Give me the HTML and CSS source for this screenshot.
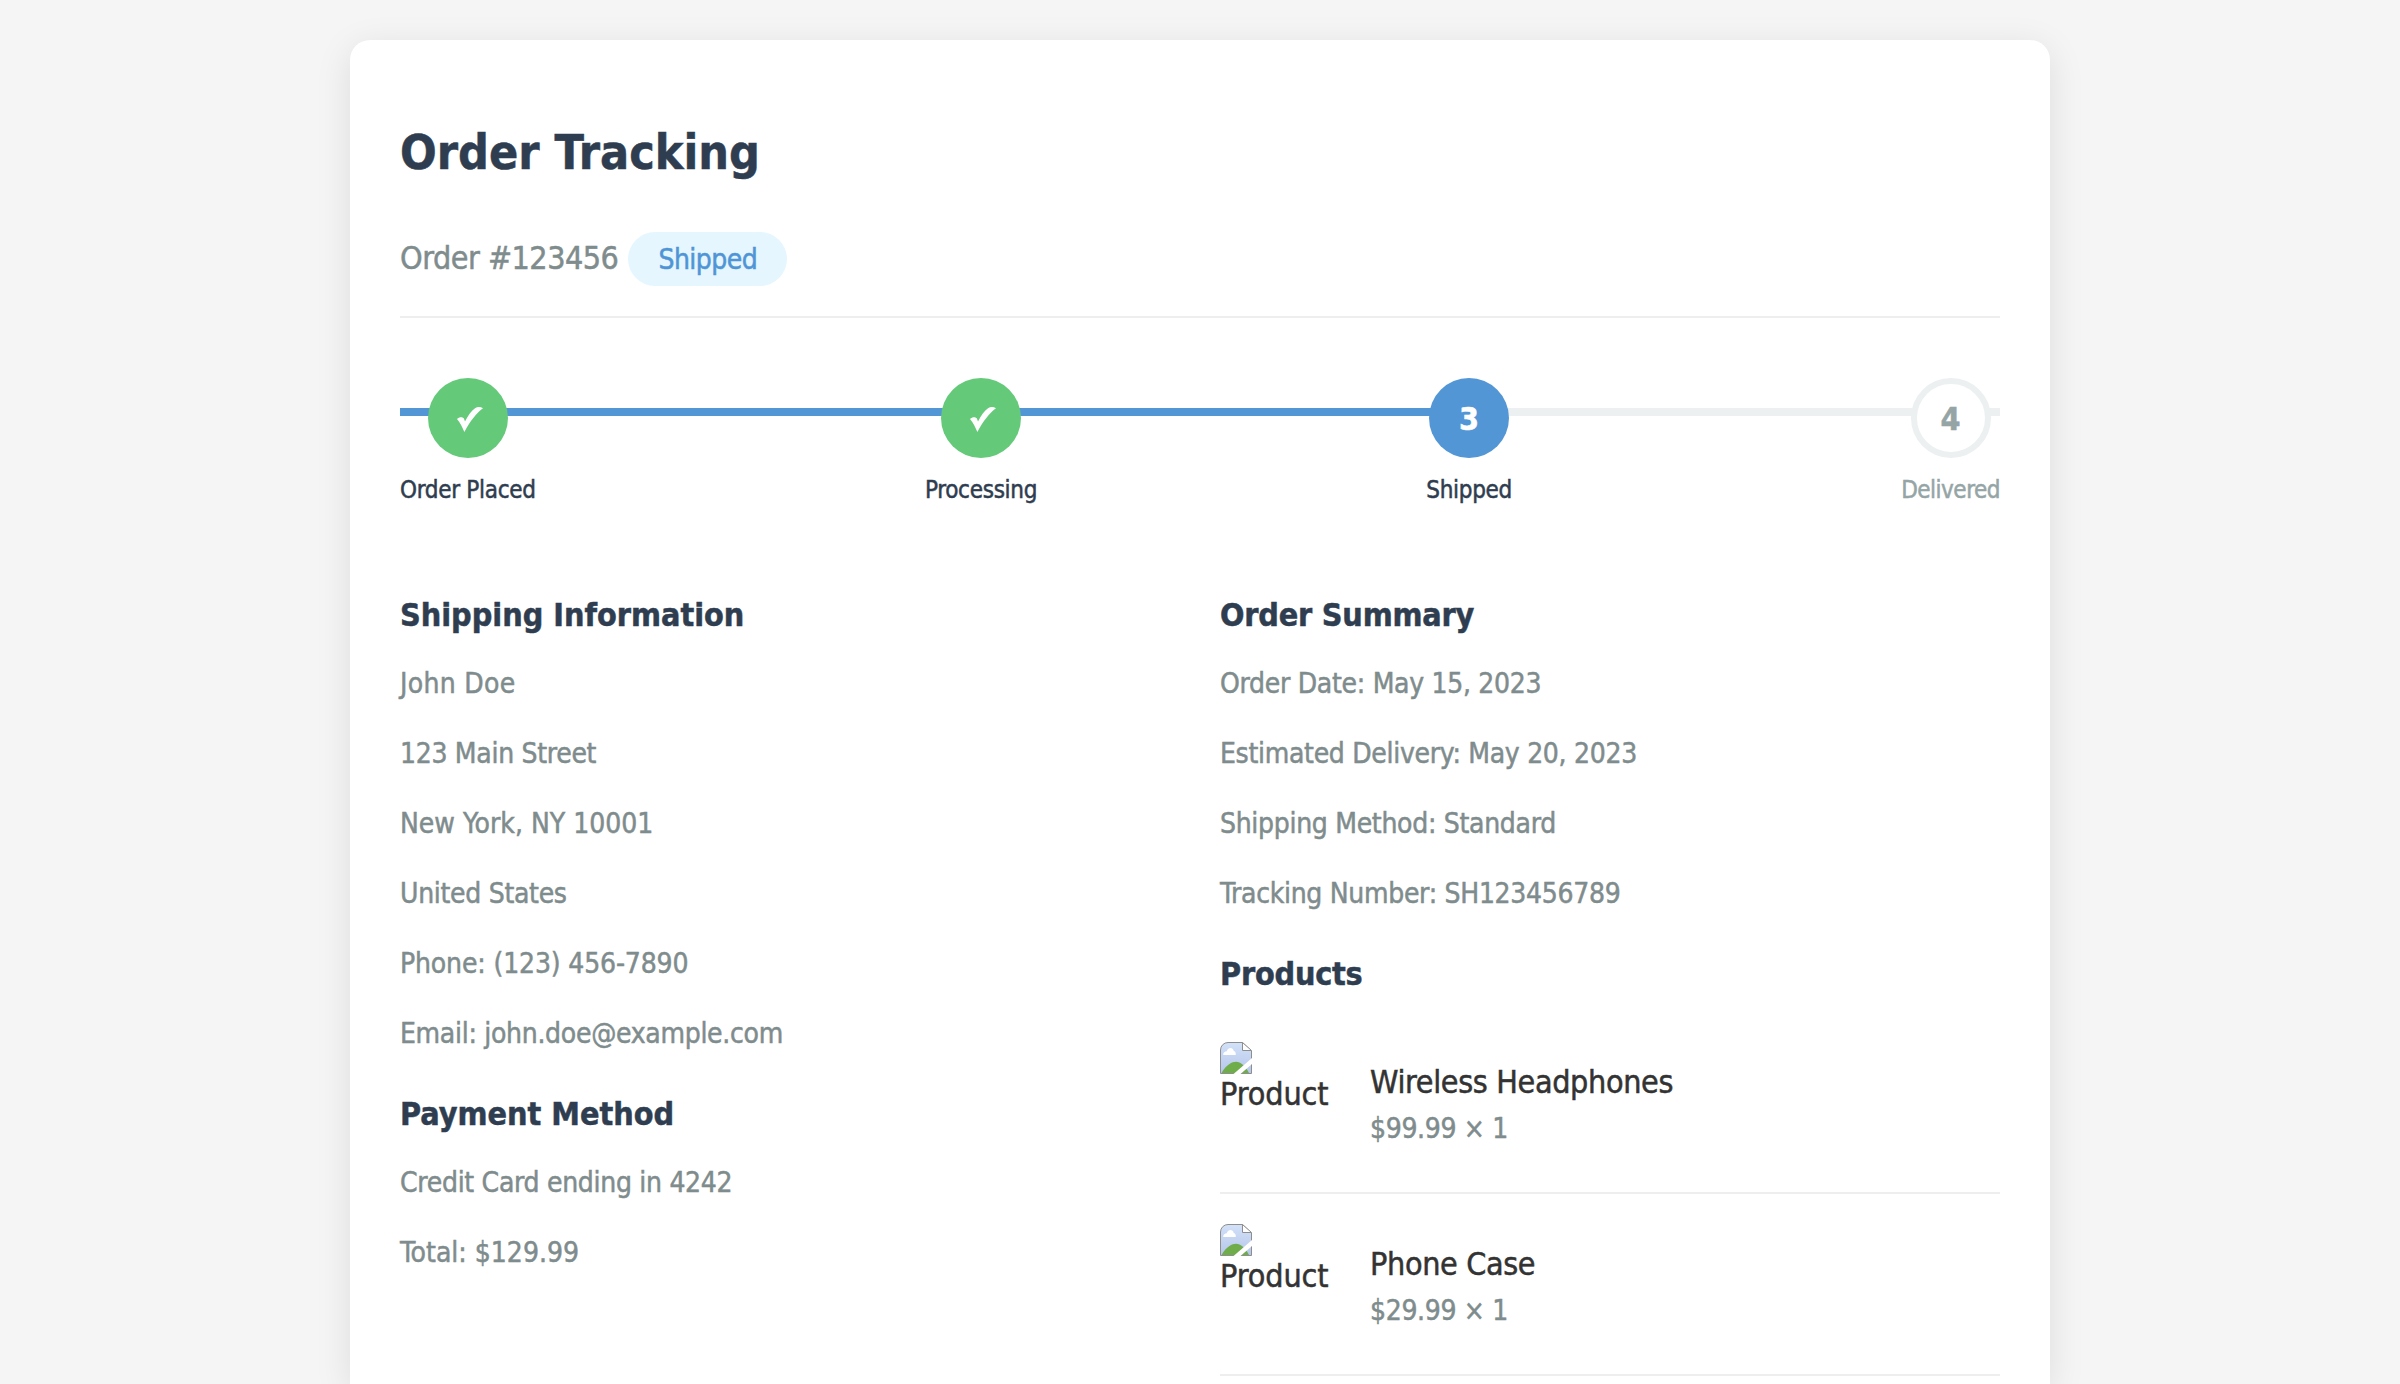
FILE: index.html
```html
<!DOCTYPE html>
<html lang="en">
<head>
<meta charset="utf-8">
<title>Order Tracking</title>
<link rel="stylesheet" href="styles.css">
</head>
<body>
<svg class="defs" width="0" height="0" aria-hidden="true">
  <defs>
    <linearGradient id="sky" x1="0" y1="0" x2="0" y2="1">
      <stop offset="0" stop-color="#d3e1f8"/>
      <stop offset="1" stop-color="#b4c6ea"/>
    </linearGradient>
    <symbol id="missing" viewBox="0 0 32 32">
      <path d="M0.5 8A7.500 7.500 0 0 1 8 .5H22.500L31.500 9V31.500H.5Z" fill="url(#sky)"/>
      <path d="M3.200 13C3 10.500 5 9.500 6.800 9.300C8 5 13 5 13.800 9C15.500 9.400 16 11 15.700 13Z" fill="#fff"/>
      <path d="M1.500 31C6.500 22.500 12 19.800 16 19.800C20.500 19.800 25.500 24 29 31Z" fill="#6fac4a"/>
      <path d="M.5 31.500V8A7.500 7.500 0 0 1 8 .5H22.500L31.500 9V31.500Z" fill="none" stroke="#8e8e8e"/>
      <path d="M22.500 .5V8.500H31.500Z" fill="#fff" stroke="#8e8e8e"/>
      <path d="M13.500 32L32 16V22L20.500 32Z" fill="#fff"/>
    </symbol>
    <symbol id="check" viewBox="0 0 26 25">
      <path d="M0 12C2.500 9.500 5.300 9.800 6.800 11.300L8 14.500C11 8.500 14.500 3.500 18 1.200C20.500-.3 23.500-.2 26 1.200C20 5.500 13 14 7.400 25C5.500 20.500 3.300 16 0 12Z" fill="#fff"/>
    </symbol>
  </defs>
</svg>
<main class="card">
  <header class="header">
    <h1 class="title">Order Tracking</h1>
    <div class="order-row">
      <span class="order-id">Order #123456</span>
      <span class="badge">Shipped</span>
    </div>
  </header>

  <ol class="timeline">
    <li class="step done"><span class="dot"><svg class="check"><use href="#check"/></svg></span><span class="label">Order Placed</span></li>
    <li class="step done"><span class="dot"><svg class="check"><use href="#check"/></svg></span><span class="label">Processing</span></li>
    <li class="step active"><span class="dot">3</span><span class="label">Shipped</span></li>
    <li class="step pending"><span class="dot">4</span><span class="label">Delivered</span></li>
  </ol>

  <div class="details">
    <div class="column">
      <section class="section">
        <h2 class="heading">Shipping Information</h2>
        <p class="line wider">John Doe</p>
        <p class="line">123 Main Street</p>
        <p class="line wide">New York, NY 10001</p>
        <p class="line">United States</p>
        <p class="line even">Phone: (123) 456-7890</p>
        <p class="line">Email: john.doe@example.com</p>
      </section>
      <section class="section">
        <h2 class="heading">Payment Method</h2>
        <p class="line">Credit Card ending in 4242</p>
        <p class="line wide">Total: $129.99</p>
      </section>
    </div>
    <div class="column">
      <section class="section">
        <h2 class="heading snug">Order Summary</h2>
        <p class="line">Order Date: May 15, 2023</p>
        <p class="line">Estimated Delivery: May 20, 2023</p>
        <p class="line">Shipping Method: Standard</p>
        <p class="line">Tracking Number: SH123456789</p>
      </section>
      <section class="section products">
        <h2 class="heading snug">Products</h2>
        <div class="product">
          <div class="thumb"><svg class="missing"><use href="#missing"/></svg><span class="alt">Product</span></div>
          <div class="info"><div class="name">Wireless Headphones</div><div class="price">$99.99 × 1</div></div>
        </div>
        <div class="product">
          <div class="thumb"><svg class="missing"><use href="#missing"/></svg><span class="alt">Product</span></div>
          <div class="info"><div class="name">Phone Case</div><div class="price">$29.99 × 1</div></div>
        </div>
      </section>
    </div>
  </div>
</main>
</body>
</html>
```
FILE: styles.css
```css
* {
  box-sizing: border-box;
}

body {
  display: flow-root;
  height: 1384px;
  margin: 0;
  overflow: hidden;
  background: #f5f5f5;
  color: #333;
  font-family: Tahoma, "DejaVu Sans Condensed", "DejaVu Sans", sans-serif;
  font-size: 32px;
  -webkit-text-stroke: 0.5px currentColor;
}

.defs {
  display: block;
}

.card {
  width: 1700px;
  height: 1344px;
  margin: 40px auto 0;
  padding: 50px 50px 0;
  background: #fff;
  border-radius: 20px 20px 0 0;
  box-shadow: 0 8px 36px rgba(0, 0, 0, 0.1);
}

.header {
  padding: 33px 0 30px;
  border-bottom: 2px solid #eee;
}

.title {
  margin: 0 0 51px;
  font-size: 48px;
  line-height: 58px;
  color: #2f3d50;
}

.order-row {
  display: flex;
  align-items: baseline;
  gap: 10px;
  height: 54px;
}

.order-id {
  color: #7f8c8d;
  letter-spacing: -0.5px;
}

.badge {
  padding: 11px 30px 9px;
  border-radius: 27px;
  background: #e5f6fe;
  color: #4f95d6;
  font-size: 28px;
  line-height: 34px;
  letter-spacing: -0.5px;
}

.timeline {
  display: flex;
  justify-content: space-between;
  margin: 60px 0 83px;
  padding: 0;
  list-style: none;
  background:
    linear-gradient(#5296d5, #5296d5) 0 30px / 66% 8px no-repeat,
    linear-gradient(#ecf0f1, #ecf0f1) 0 30px / 100% 8px no-repeat;
}

.step {
  display: flex;
  flex-direction: column;
  align-items: center;
  gap: 14px;
}

.dot {
  display: flex;
  align-items: center;
  justify-content: center;
  width: 80px;
  height: 80px;
  padding-top: 1px;
  border-radius: 50%;
  color: #fff;
  font-weight: bold;
}

.done .dot {
  background: #65c97a;
}

.active .dot {
  background: #5296d5;
}

.pending .dot {
  background: #fff;
  border: 6px solid #ecf0f1;
  color: #95a5a6;
}

.check {
  width: 26px;
  height: 25px;
  margin: 1px 0 0 5px;
}

.label {
  font-size: 24px;
  line-height: 36px;
  letter-spacing: -0.3px;
  color: #2f3d50;
}

.pending .label {
  color: #95a5a6;
  letter-spacing: -0.5px;
}

.details {
  display: grid;
  grid-template-columns: 1fr 1fr;
  gap: 40px;
}

.column {
  display: flex;
  flex-direction: column;
  gap: 35px;
}

.heading {
  margin: 0 0 24px;
  font-size: 32px;
  line-height: 48px;
  color: #2f3d50;
}

.snug {
  letter-spacing: -0.2px;
}

.line {
  margin: 0 0 28px;
  font-size: 28px;
  line-height: 42px;
  letter-spacing: -0.3px;
  color: #7f8c8d;
}

.line:last-child {
  margin-bottom: 0;
}

.even {
  letter-spacing: -0.15px;
}

.wide {
  letter-spacing: 0;
}

.wider {
  letter-spacing: 0.3px;
}

.products .heading {
  margin-bottom: 14px;
}

.product {
  display: flex;
  align-items: center;
  gap: 30px;
  padding: 30px 0;
  border-bottom: 2px solid #eee;
}

.thumb {
  display: flex;
  flex-direction: column;
  width: 120px;
  height: 120px;
}

.missing {
  width: 32px;
  height: 32px;
}

.alt {
  line-height: 41px;
  letter-spacing: -0.1px;
}

.info {
  padding-top: 3px;
}

.name {
  line-height: 48px;
  letter-spacing: -0.36px;
}

.price {
  margin-top: 2px;
  font-size: 28px;
  line-height: 42px;
  letter-spacing: -0.33px;
  color: #7f8c8d;
}
```
